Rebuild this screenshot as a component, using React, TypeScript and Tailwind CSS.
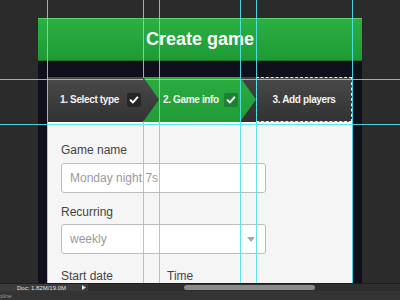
import React from "react";

const Check = () => (
  <svg width="10" height="10" viewBox="0 0 10 10">
    <path d="M1.6 5.2 L4 7.4 L8.4 2.4" fill="none" stroke="#ffffff" strokeWidth="2" strokeLinecap="round" strokeLinejoin="round" />
  </svg>
);

const V = ({ x }: { x: number }) => (
  <div className="absolute top-0 h-[283px] w-px bg-[#4fe4f0] opacity-90" style={{ left: x }} />
);
const H = ({ y }: { y: number }) => (
  <div className="absolute left-0 w-[400px] h-px bg-[#4fe4f0] opacity-90" style={{ top: y }} />
);

export default function App() {
  return (
    <div
      className="relative w-[400px] h-[300px] overflow-hidden bg-[#2b2b2b] flex flex-col"
      style={{ fontFamily: '"Liberation Sans", Arial, sans-serif' }}
    >
      <div className="h-[283px] pl-[38px] pt-[18px] flex">
        <div className="w-[324px] h-full bg-[#10101c] flex flex-col">
          <div className="h-[44px] flex items-center justify-center border-t border-t-[#5bd36b] border-b border-b-[#177226] bg-gradient-to-b from-[#2bb043] to-[#1f9a35]">
            <span className="text-white font-bold text-[18px] leading-none">Create game</span>
          </div>
          <div className="h-[17px]" />
          <div className="ml-[9px] w-[305px] h-[45px] flex">
            <div className="relative w-[96px] h-full flex items-center pl-[13px] bg-gradient-to-b from-[#4a4a4a] to-[#323232]">
              <span className="text-[#f2f2f2] font-bold text-[10px] tracking-[-0.35px]">1. Select type</span>
              <div className="ml-auto mr-[2px] w-[14px] h-[14px] rounded-[2px] bg-[#262626] flex items-center justify-center">
                <Check />
              </div>
              <svg className="absolute right-[-16px] top-0 z-10" width="16" height="45" viewBox="0 0 16 45">
                <defs>
                  <linearGradient id="dg" x1="0" y1="0" x2="0" y2="1">
                    <stop offset="0" stopColor="#4a4a4a" />
                    <stop offset="1" stopColor="#323232" />
                  </linearGradient>
                </defs>
                <polygon points="0,0 16,22.5 0,45" fill="url(#dg)" />
              </svg>
            </div>
            <div className="w-[97px] h-full flex items-center pl-[20px] bg-gradient-to-b from-[#2aab40] to-[#229d37]">
              <span className="text-[#f4f4f4] font-bold text-[10px] tracking-[-0.35px]">2. Game info</span>
              <div className="ml-auto mr-[2px] w-[14px] h-[14px] rounded-[2px] bg-[#1c8230] flex items-center justify-center">
                <Check />
              </div>
            </div>
            <div className="w-[16px] h-full bg-gradient-to-b from-[#444444] to-[#303030]">
              <svg width="16" height="45" viewBox="0 0 16 45">
                <defs>
                  <linearGradient id="gg" x1="0" y1="0" x2="0" y2="1">
                    <stop offset="0" stopColor="#2aab40" />
                    <stop offset="1" stopColor="#229d37" />
                  </linearGradient>
                </defs>
                <polygon points="0,0 16,22.5 0,45" fill="url(#gg)" />
              </svg>
            </div>
            <div className="w-[96px] h-full flex items-center justify-center border border-dashed border-[#e8e8e8] bg-gradient-to-b from-[#4a4a4a] to-[#323232]">
              <span className="text-[#f2f2f2] font-bold text-[10px] tracking-[-0.35px]">3. Add players</span>
            </div>
          </div>
          <div className="ml-[9px] w-[305px] flex-1 bg-[#f5f5f5] pl-[14px] pt-[21px] flex flex-col">
            <div className="text-[12px] leading-[14px] text-[#444444]">Game name</div>
            <div className="mt-[6px] w-[205px] h-[30px] rounded-[3px] border border-[#bdbdbd] bg-white flex items-center pl-[8px]">
              <span className="text-[12px] text-[#9a9a9a]">Monday night 7s</span>
            </div>
            <div className="mt-[12px] text-[12px] leading-[14px] text-[#444444]">Recurring</div>
            <div className="mt-[5px] w-[205px] h-[30px] rounded-[3px] border border-[#bdbdbd] bg-white flex items-center pl-[8px] pr-[10px]">
              <span className="text-[12px] text-[#9a9a9a]">weekly</span>
              <svg className="ml-auto" width="8" height="5" viewBox="0 0 8 5">
                <polygon points="0,0 8,0 4,5" fill="#a8a8a8" />
              </svg>
            </div>
            <div className="mt-[15px] flex text-[12px] leading-[14px] text-[#444444]">
              <span className="w-[106px]">Start date</span>
              <span>Time</span>
            </div>
          </div>
        </div>
      </div>
      <div className="h-[8px] flex items-center bg-[#3c3c3c] border-t border-[#1c1c1c]">
        <div className="ml-[15px] w-[66px] h-full flex items-center">
          <span className="ml-[2px] text-[6px] leading-none text-[#e0e0e0]">Doc: 1.82M/19.0M</span>
        </div>
        <svg className="ml-[1px]" width="4" height="5" viewBox="0 0 4 5">
          <polygon points="0,0 4,2.5 0,5" fill="#dddddd" />
        </svg>
        <div className="ml-[2px] flex-1 h-full bg-[#2e2e2e] flex items-center">
          <div className="ml-[96px] w-[131px] h-[5px] rounded-full bg-[#8a8a8a]" />
        </div>
      </div>
      <div className="flex-1 bg-[#343434] flex items-center">
        <span className="ml-[-1px] text-[6px] leading-none text-[#9a9a9a]">oline</span>
      </div>
      <div className="pointer-events-none absolute inset-0">
        <V x={47} />
        <V x={143} />
        <V x={159} />
        <V x={240} />
        <V x={256} />
        <V x={352} />
        <H y={79} />
        <H y={124} />
      </div>
    </div>
  );
}
